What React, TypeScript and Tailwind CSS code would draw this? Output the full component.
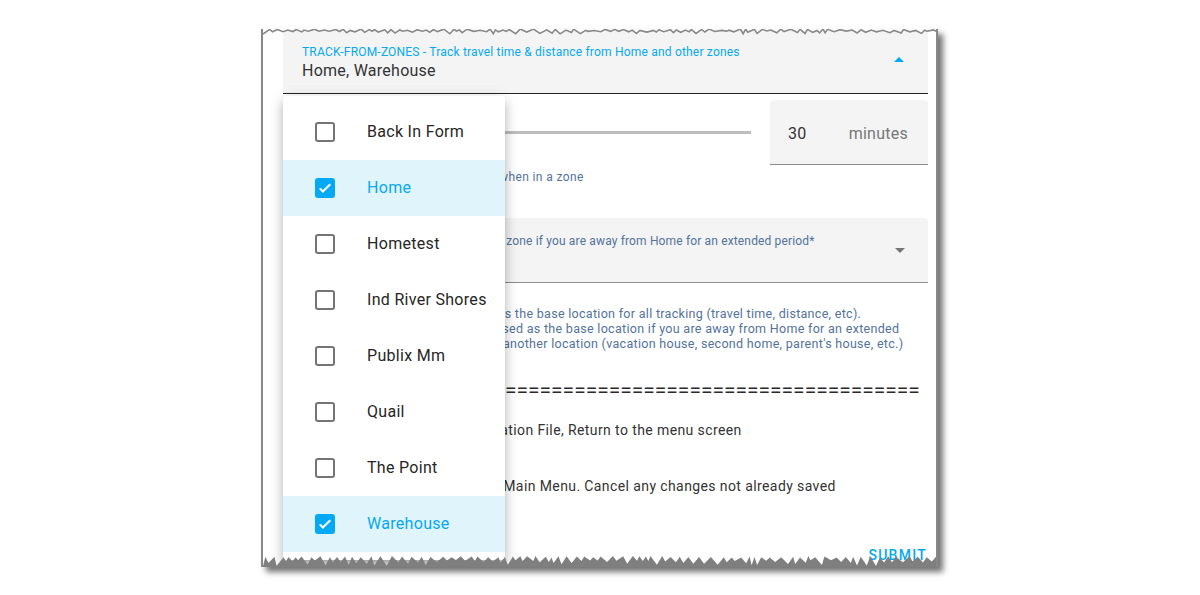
import { useMemo } from "react"

type Pt = [number, number]

function rng(seed: number) {
  let s = seed
  return () => {
    s = (s * 16807) % 2147483647
    return (s - 1) / 2147483646
  }
}

function tornEdge(width: number, seed: number, low: number, high: number): Pt[] {
  const r = rng(seed)
  const pts: Pt[] = []
  let x = 0
  let peak = false
  while (x < width) {
    pts.push([x, peak ? low + r() * 1.5 : high - r() * (high - low) * 0.6])
    x += 2 + r() * 5
    peak = !peak
  }
  pts.push([width, high])
  return pts
}

const zones = [
  { name: "Back In Form", checked: false },
  { name: "Home", checked: true },
  { name: "Hometest", checked: false },
  { name: "Ind River Shores", checked: false },
  { name: "Publix Mm", checked: false },
  { name: "Quail", checked: false },
  { name: "The Point", checked: false },
  { name: "Warehouse", checked: true },
]

function Checkbox({ checked }: { checked: boolean }) {
  if (checked) {
    return (
      <span className="flex h-[20px] w-[20px] items-center justify-center rounded-[3px] bg-[#03a9f4]">
        <svg viewBox="0 0 24 24" className="h-[18px] w-[18px]" fill="none">
          <path d="M5 12.5l4.2 4.2L19 7" stroke="white" strokeWidth="2.8" />
        </svg>
      </span>
    )
  }
  return <span className="h-[20px] w-[20px] rounded-[3px] border-2 border-[#757575]" />
}

function ZoneMenu() {
  return (
    <div className="absolute left-[20px] top-[67px] w-[222px] rounded-[4px] bg-white py-[8px] shadow-[0_5px_5px_-3px_rgba(0,0,0,0.2),0_8px_10px_1px_rgba(0,0,0,0.14),0_3px_14px_2px_rgba(0,0,0,0.12)]">
      {zones.map((z) => (
        <div
          key={z.name}
          className={`flex h-[56px] items-center pl-[32px] ${z.checked ? "bg-[#e0f4fc]" : ""}`}
        >
          <Checkbox checked={z.checked} />
          <span
            className={`ml-[32px] text-[16px] tracking-[0.3px] ${z.checked ? "text-[#03a9f4]" : "text-[#262626]"}`}
          >
            {z.name}
          </span>
        </div>
      ))}
    </div>
  )
}

export default function App() {
  const top = useMemo(() => tornEdge(677, 7, 0, 5), [])
  const bottom = useMemo(() => tornEdge(677, 31, 0, 10), [])
  const topLine = top.map((p) => p.join(",")).join(" ")
  const bottomLine = bottom.map((p) => p.join(",")).join(" ")

  return (
    <div className="h-[595px] w-[1200px] overflow-hidden bg-white pl-[261px] pt-[29px] font-['Roboto',sans-serif]">
      <div className="relative h-[538px] w-[677px] overflow-hidden border-x-2 border-[#888888] bg-white shadow-[5px_5px_6px_rgba(0,0,0,0.55)]">
        <div className="pl-[20px] pr-[8px]">
          {/* track-from-zones select (open) */}
          <div className="relative h-[65px] border-b border-[#222] bg-[#f4f4f4] px-[19px] pt-[15px]">
            <p className="text-[12px] leading-4 tracking-[0.2px] text-[#03a9f4]">
              TRACK-FROM-ZONES - Track travel time &amp; distance from Home and other zones
            </p>
            <p className="mt-px text-[16px] leading-5 tracking-[0.25px] text-[#333]">Home, Warehouse</p>
            <span className="absolute right-[24px] top-[28px] h-0 w-0 border-x-[5px] border-b-[5px] border-x-transparent border-b-[#03a9f4]" />
          </div>

          {/* inzone interval slider */}
          <div className="mt-[6px] flex h-[65px] items-center">
            <div className="ml-[16px] mr-[19px] h-[3px] flex-1 bg-[#bdbdbd]" />
            <div className="flex h-[65px] w-[158px] items-center justify-between rounded-t-[4px] border-b border-[#8c8c8c] bg-[#f4f4f4] pl-[18px] pr-[20px] pt-[3px] text-[16px] tracking-[0.25px]">
              <span className="text-[#333]">30</span>
              <span className="text-[#777]">minutes</span>
            </div>
          </div>
          <p className="mt-[4px] whitespace-nowrap pl-[22px] text-[12px] leading-4 tracking-[0.4px] text-[#52739c]">
            Update location every 30 minutes when in a zone
          </p>

          {/* track-from-home-zone select */}
          <div className="relative mt-[33px] h-[65px] rounded-t-[4px] border-b border-[#8c8c8c] bg-[#f4f4f4] px-[19px] pt-[15px]">
            <p className="whitespace-nowrap text-[12px] leading-4 tracking-[0.15px] text-[#52739c]">
              TRACK-FROM-HOME-ZONE - Select a zone if you are away from Home for an extended period*
            </p>
            <span className="absolute right-[23px] top-[30px] h-0 w-0 border-x-[5px] border-t-[5px] border-x-transparent border-t-[#757575]" />
          </div>
          <div className="mt-[23px] text-[12.5px] leading-[15px] tracking-[0.3px] text-[#52739c]">
            <p className="whitespace-nowrap pl-[20px]">Normally, the Home zone is used as the base location for all tracking (travel time, distance, etc).</p>
            <p className="whitespace-nowrap pl-[34px]">However, another zone can be used as the base location if you are away from Home for an extended</p>
            <p className="whitespace-nowrap pl-[59px]">period of time or staying at another location (vacation house, second home, parent's house, etc.)</p>
          </div>

          <div className="mr-[8px] mt-[26px] h-[26px] overflow-hidden">
            <p className="ml-[3px] whitespace-nowrap text-[21px] leading-[26px] text-[#2a2a2a]">
              ===========================================================
            </p>
          </div>

          <div className="mt-[17px] text-[14px] leading-5 tracking-[0.4px] text-[#333]">
            <p className="whitespace-nowrap pl-[38px]">SAVE - Update the Configuration File, Return to the menu screen</p>
            <p className="mt-[36px] whitespace-nowrap pl-[64px]">CANCEL - Return to the Main Menu. Cancel any changes not already saved</p>
          </div>

          <div className="mt-[51px] flex justify-end pr-px">
            <span className="text-[14px] font-medium leading-4 tracking-[1.25px] text-[#03a9f4]">SUBMIT</span>
          </div>
        </div>

        <ZoneMenu />

        <svg className="absolute left-0 top-0" width="677" height="8">
          <polygon points={`0,-1 ${topLine} 677,-1`} fill="white" />
          <polyline points={topLine} fill="none" stroke="#888" strokeWidth="1.6" />
        </svg>
        <svg className="absolute bottom-0 left-0" width="677" height="11">
          <polygon points={`${bottomLine} 677,12 0,12`} fill="#7f7f7f" />
        </svg>
      </div>
    </div>
  )
}
